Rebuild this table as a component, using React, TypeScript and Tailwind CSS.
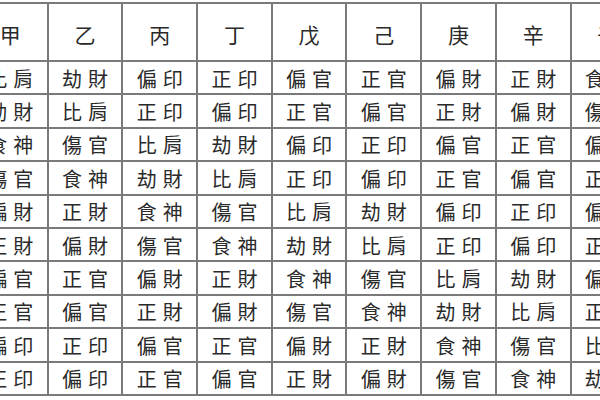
const STEMS = ['甲', '乙', '丙', '丁', '戊', '己', '庚', '辛', '壬', '癸']
const GODS = ['比肩', '劫財', '食神', '傷官', '偏財', '正財', '偏官', '正官', '偏印', '正印']

// day stem (column) vs other stem (row) -> ten god
function godFor(col: number, row: number) {
  const sameYin = col % 2 === row % 2
  const elemDiff = (Math.floor(row / 2) - Math.floor(col / 2) + 5) % 5
  // 0 same, 1 I produce, 2 I control, 3 controls me, 4 produces me
  const base = [0, 2, 4, 6, 8][elemDiff]
  return GODS[base + (sameYin ? 0 : 1)]
}

export default function App() {
  return (
    <div
      className="w-[600px] h-[400px] overflow-hidden bg-white text-[#2a2a2a]"
      style={{ fontFamily: '"Noto Sans CJK TC", "Noto Sans CJK SC", sans-serif' }}
    >
      <table className="table-fixed border-collapse ml-[-28px] mt-[2px] w-[747px]">
        <thead>
          <tr className="h-[58px]">
            {STEMS.map(s => (
              <th key={s} className="w-[74.7px] border-2 border-[#7a7a7a] font-normal text-[21px] pt-[5px] text-center">
                {s}
              </th>
            ))}
          </tr>
        </thead>
        <tbody>
          {STEMS.map((_, r) => (
            <tr key={r} className="h-[33.4px]">
              {STEMS.map((_, c) => (
                <td
                  key={c}
                  className="border-2 border-[#7a7a7a] text-[20px] leading-none text-center tracking-[6px] pl-[6px] pt-[2px] font-normal"
                >
                  {godFor(c, r)}
                </td>
              ))}
            </tr>
          ))}
        </tbody>
      </table>
    </div>
  )
}
